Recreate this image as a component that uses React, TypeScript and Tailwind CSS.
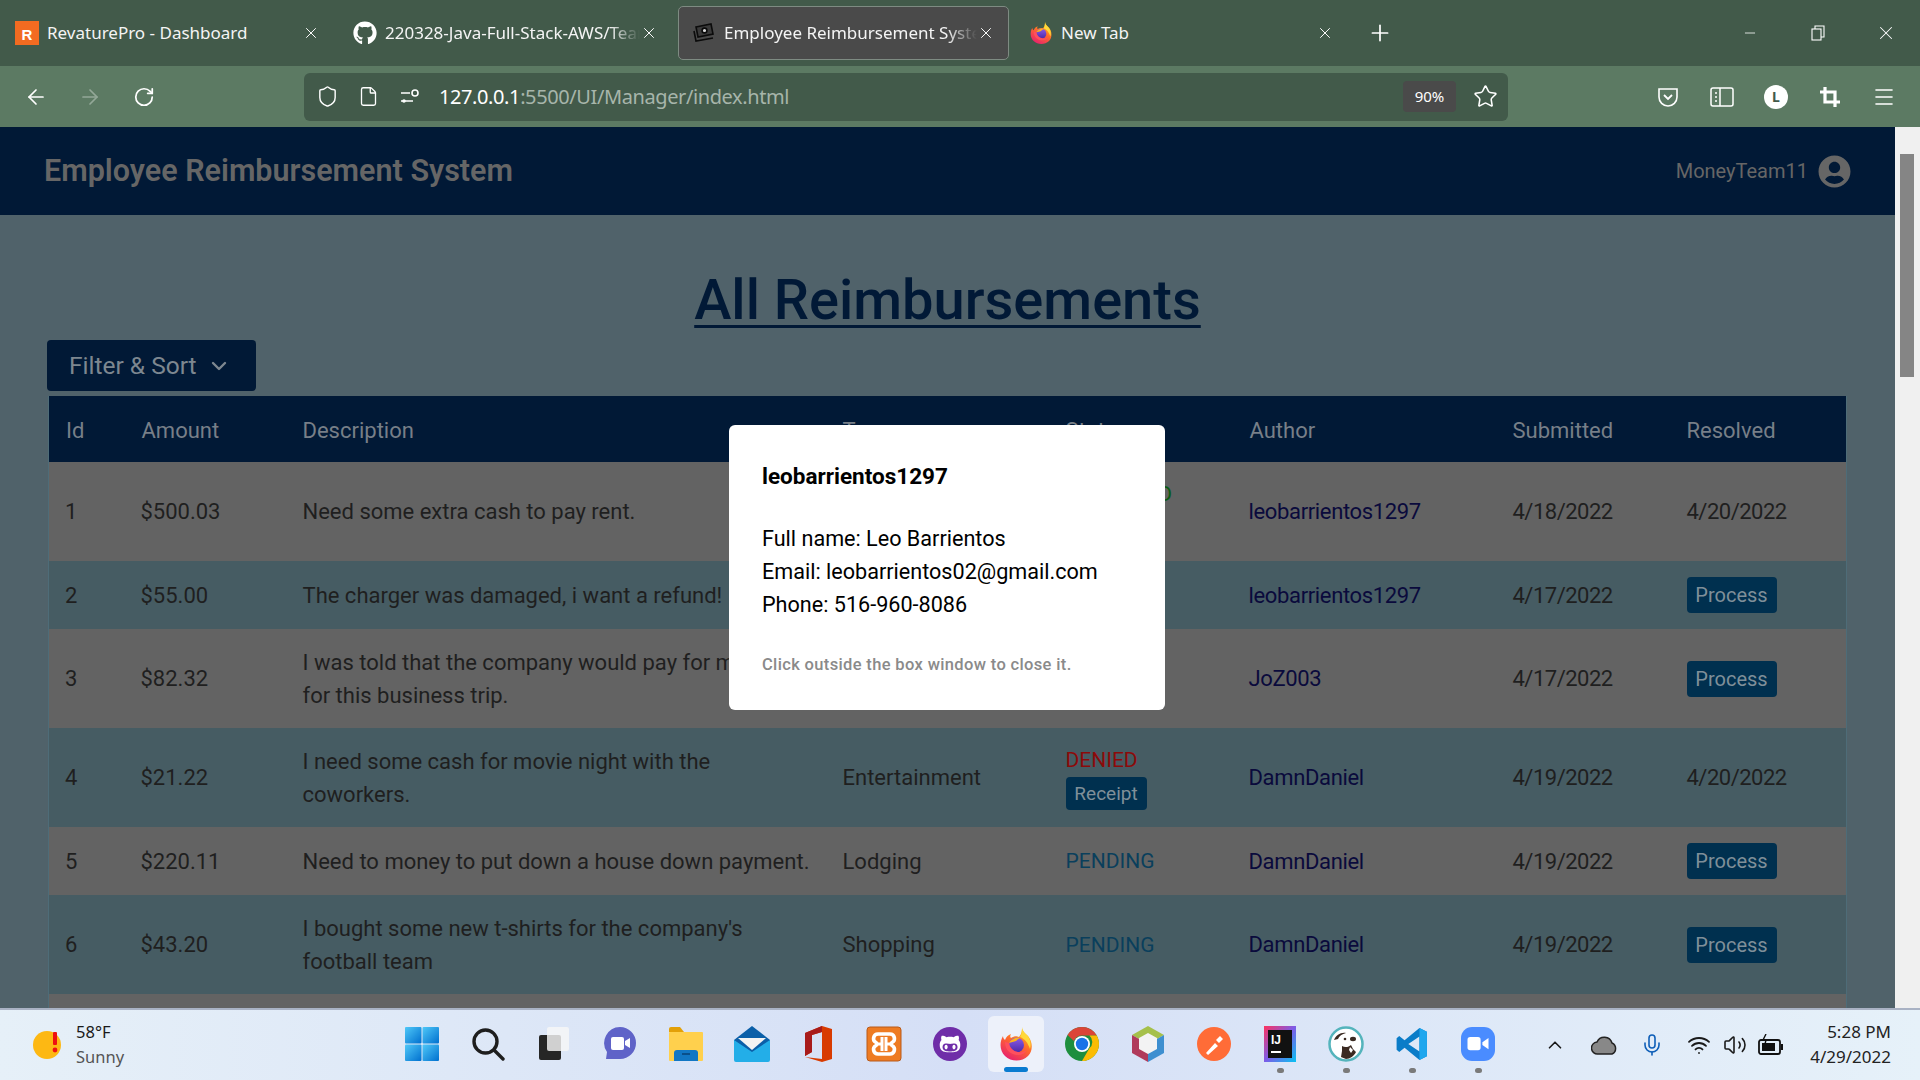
import {
  ArrowLeft,
  ArrowRight,
  ChevronDown,
  ChevronUp,
  File,
  Menu,
  Mic,
  Minus,
  Plus,
  RotateCw,
  Shield,
  Star,
  Volume2,
  Wifi,
  X,
} from 'lucide-react';
import { FaGithub, FaGithubAlt, FaUserCircle } from 'react-icons/fa';
import type { ReactNode } from 'react';

const pageFont = "font-['Roboto',sans-serif]";
const uiFont = "font-['Noto_Sans',sans-serif]";

type Row = {
  id: number;
  amount: string;
  description: string;
  type: string;
  status: 'APPROVED' | 'DENIED' | 'PENDING';
  receipt?: boolean;
  author: string;
  submitted: string;
  resolved?: string;
  height: string;
};

const rows: Row[] = [
  { id: 1, amount: '$500.03', description: 'Need some extra cash to pay rent.', type: 'Lodging', status: 'APPROVED', receipt: true, author: 'leobarrientos1297', submitted: '4/18/2022', resolved: '4/20/2022', height: 'h-[99px]' },
  { id: 2, amount: '$55.00', description: 'The charger was damaged, i want a refund!', type: 'Other', status: 'PENDING', author: 'leobarrientos1297', submitted: '4/17/2022', height: 'h-[68px]' },
  { id: 3, amount: '$82.32', description: 'I was told that the company would pay for meals\nfor this business trip.', type: 'Food', status: 'PENDING', author: 'JoZ003', submitted: '4/17/2022', height: 'h-[99px]' },
  { id: 4, amount: '$21.22', description: 'I need some cash for movie night with the\ncoworkers.', type: 'Entertainment', status: 'DENIED', receipt: true, author: 'DamnDaniel', submitted: '4/19/2022', resolved: '4/20/2022', height: 'h-[99px]' },
  { id: 5, amount: '$220.11', description: 'Need to money to put down a house down payment.', type: 'Lodging', status: 'PENDING', author: 'DamnDaniel', submitted: '4/19/2022', height: 'h-[68px]' },
  { id: 6, amount: '$43.20', description: "I bought some new t-shirts for the company's\nfootball team", type: 'Shopping', status: 'PENDING', author: 'DamnDaniel', submitted: '4/19/2022', height: 'h-[99px]' },
  { id: 7, amount: '$18.75', description: 'Lunch with a client.', type: 'Food', status: 'PENDING', author: 'DamnDaniel', submitted: '4/19/2022', height: 'h-[68px]' },
];

const statusColor = {
  APPROVED: 'text-[#0A5C12]',
  DENIED: 'text-[#8C0A0A]',
  PENDING: 'text-[#0A3F5C]',
};

const FirefoxIcon = ({ size = 24, id }: { size?: number; id: string }) => (
  <svg width={size} height={size} viewBox="0 0 36 36">
    <defs>
      <linearGradient id={`${id}Body`} x1="0.8" y1="0.1" x2="0.3" y2="1">
        <stop offset="0" stopColor="#FFC21A" />
        <stop offset="0.45" stopColor="#FF6A2B" />
        <stop offset="1" stopColor="#E8206F" />
      </linearGradient>
      <linearGradient id={`${id}Globe`} x1="0.5" y1="0" x2="0.5" y2="1">
        <stop offset="0" stopColor="#8C5BE8" />
        <stop offset="1" stopColor="#4A2AA8" />
      </linearGradient>
    </defs>
    <path d="M24 1c0 4 3 6 6 9 5 6 5 15 0 20-6 6-17 6-23 0C2 25 1 17 5 10c0 2 1 3 2 4 1-3 3-5 6-6-1 2-1 3 0 4 3-2 6-2 8-1 3-3 3-7 3-10z" fill={`url(#${id}Body)`} />
    <path d="M24 1c0 5 5 7 7 11 2 4 2 8 1 11-2-6-5-10-10-12 2-3 2-7 2-10z" fill="#FFD93B" />
    <circle cx="18.5" cy="19" r="7.5" fill={`url(#${id}Globe)`} />
    <path d="M11 17c2-4 7-6 11-5-2 1-3 2-4 3-2 1-5 1-7 2z" fill="#FFB31A" />
    <path d="M7 16c0 8 6 13 13 13 4 0 7-2 9-5-3 2-6 3-9 2-5-1-8-4-9-9z" fill="#FF4F5E" />
  </svg>
);

const TabIconRevature = () => (
  <div className="w-6 h-6 bg-[#F26B21] flex items-end justify-center text-white text-[15px] font-bold leading-[20px] font-['Liberation_Sans',sans-serif]">
    R
  </div>
);

const TabIconCash = () => (
  <svg width="24" height="24" viewBox="0 0 24 24" fill="none" stroke="#0B0B0B" strokeWidth="1.6">
    <path d="M4 6l15-3 2 10-15 3z" fill="#3A3A3A" />
    <circle cx="12.5" cy="9.5" r="2.4" fill="#D8D8D8" />
    <path d="M2 10l2 10 17-3" />
  </svg>
);

const Tab = ({ icon, title, active, fade, textWidth }: { icon: ReactNode; title: string; active?: boolean; fade?: boolean; textWidth: string }) => (
  <div className={`w-[331px] h-[54px] shrink-0 rounded-[5px] flex items-center pl-[13px] ${active ? 'bg-[#4A4A4A] border border-[#7E8B82]' : ''}`}>
    <div className="w-6 h-6 shrink-0 flex items-center justify-center">{icon}</div>
    <span
      className={`ml-2 text-[17px] text-[#F4F4F4] whitespace-nowrap overflow-hidden ${textWidth} ${fade ? '[mask-image:linear-gradient(to_right,black_88%,transparent)]' : ''}`}
    >
      {title}
    </span>
    <X size={18} strokeWidth={1.3} className="text-white ml-auto mr-[13px] shrink-0" />
  </div>
);

const TabBar = () => (
  <div className={`h-[66px] bg-[#425A4A] flex items-center pl-[2px] gap-[7px] shrink-0 ${uiFont}`}>
    <Tab icon={<TabIconRevature />} title="RevaturePro - Dashboard" textWidth="w-[260px]" />
    <Tab icon={<FaGithub size={24} className="text-white" />} title="220328-Java-Full-Stack-AWS/Team-Project" fade textWidth="w-[256px]" />
    <Tab icon={<TabIconCash />} title="Employee Reimbursement System" active fade textWidth="w-[254px]" />
    <Tab icon={<FirefoxIcon size={28} id="ffTab" />} title="New Tab" textWidth="w-[260px]" />
    <Plus size={26} strokeWidth={1.6} className="text-white ml-[13px]" />
    <div className="ml-auto flex items-center text-white">
      <div className="w-[68px] flex justify-center"><Minus size={16} strokeWidth={1.2} /></div>
      <div className="w-[68px] flex justify-center">
        <svg width="16" height="16" viewBox="0 0 16 16" fill="none" stroke="currentColor" strokeWidth="1.1">
          <rect x="2" y="4" width="9" height="11" />
          <path d="M5 4V1h9v11h-3" />
        </svg>
      </div>
      <div className="w-[68px] flex justify-center"><X size={22} strokeWidth={1.1} /></div>
    </div>
  </div>
);

const CropIcon = () => (
  <svg width="22" height="22" viewBox="0 0 22 22" fill="none" stroke="white" strokeWidth="3.2">
    <path d="M6 1v15h15" />
    <path d="M1 6h15v15" />
  </svg>
);

const ToolbarButton = ({ children }: { children: ReactNode }) => (
  <div className="w-[54px] h-full flex items-center justify-center text-white">{children}</div>
);

const Toolbar = () => (
  <div className={`h-[61px] bg-[#5C7A63] flex items-center pl-[9px] shrink-0 ${uiFont}`}>
    <ToolbarButton><ArrowLeft size={24} strokeWidth={1.7} /></ToolbarButton>
    <ToolbarButton><ArrowRight size={24} strokeWidth={1.7} className="text-[#93A898]" /></ToolbarButton>
    <ToolbarButton><RotateCw size={22} strokeWidth={1.9} /></ToolbarButton>
    <div className="ml-[133px] w-[1204px] h-12 rounded-md bg-[#425A4A] flex items-center pl-[12px] text-white">
      <Shield size={23} strokeWidth={1.5} />
      <File size={21} strokeWidth={1.5} className="ml-[19px]" />
      <svg width="22" height="16" viewBox="0 0 22 16" fill="none" stroke="white" strokeWidth="1.6" className="ml-[21px]">
        <path d="M1 4h9M1 12h12" />
        <circle cx="15" cy="4" r="3" />
        <circle cx="4" cy="12" r="1" />
      </svg>
      <span className="ml-[17px] text-[20px] whitespace-nowrap tracking-[-0.4px]">
        127.0.0.1<span className="text-[#A7B5AA]">:5500/UI/Manager/index.html</span>
      </span>
      <div className="ml-auto w-[53px] h-[31px] rounded bg-[#4A4A4A] flex items-center justify-center text-[15px]">90%</div>
      <Star size={25} strokeWidth={1.5} className="ml-[17px] mr-[10px]" />
    </div>
    <div className="ml-[133px] flex h-full">
      <ToolbarButton>
        <svg width="22" height="22" viewBox="0 0 22 22" fill="none" stroke="white" strokeWidth="1.6">
          <path d="M2 3h18v8a9 9 0 0 1-18 0z" />
          <path d="M7 9l4 4 4-4" strokeWidth="1.8" />
        </svg>
      </ToolbarButton>
      <ToolbarButton>
        <svg width="24" height="22" viewBox="0 0 24 22" fill="none" stroke="white" strokeWidth="1.5">
          <rect x="1" y="2" width="22" height="18" rx="2" />
          <path d="M10 2v18M5 7h2M5 11h2M5 15h2" />
        </svg>
      </ToolbarButton>
      <ToolbarButton>
        <div className="w-6 h-6 rounded-full bg-white text-[#425A4A] text-[14px] font-bold flex items-center justify-center">L</div>
      </ToolbarButton>
      <ToolbarButton><CropIcon /></ToolbarButton>
      <ToolbarButton><Menu size={24} strokeWidth={1.6} /></ToolbarButton>
    </div>
  </div>
);

const StatusCell = ({ row }: { row: Row }) => (
  <div className="flex flex-col items-start">
    <span className={`text-[21px] leading-[28px] ${statusColor[row.status]}`}>{row.status}</span>
    {row.receipt && (
      <button className="mt-[3px] h-[33px] w-[81px] rounded bg-[#00304F] text-[#7F8F99] text-[19px] leading-none">Receipt</button>
    )}
  </div>
);

const ReimbursementTable = () => (
  <table className="w-[1799px] table-fixed border-collapse border-x border-[#4E6C78] text-[22px] text-[#1F1F1F]">
    <colgroup>
      <col className="w-[76px]" />
      <col className="w-[161px]" />
      <col className="w-[540px]" />
      <col className="w-[223px]" />
      <col className="w-[184px]" />
      <col className="w-[263px]" />
      <col className="w-[174px]" />
      <col />
    </colgroup>
    <thead>
      <tr className="h-[66px] bg-[#011936] text-[#777F88] text-left">
        {['Id', 'Amount', 'Description', 'Type', 'Status', 'Author', 'Submitted', 'Resolved'].map((h) => (
          <th key={h} className="pl-[17px] pt-[2px] font-normal">{h}</th>
        ))}
      </tr>
    </thead>
    <tbody>
      {rows.map((row, i) => (
        <tr key={row.id} className={`${row.height} ${i % 2 === 0 ? 'bg-[#636363]' : 'bg-[#465C63]'}`}>
          <td className="pl-[16px]">{row.id}</td>
          <td className="pl-[16px]">{row.amount}</td>
          <td className="pl-[17px] leading-[33px] whitespace-pre-line">{row.description}</td>
          <td className="pl-[17px]">{row.type}</td>
          <td className="pl-[17px]"><StatusCell row={row} /></td>
          <td className="pl-[16px] text-[#0A0A3C] tracking-[-0.35px]">{row.author}</td>
          <td className="pl-[17px] tracking-[-0.5px]">{row.submitted}</td>
          <td className="pl-[17px] tracking-[-0.5px]">
            {row.resolved ?? (
              <button className="h-9 w-[90px] rounded bg-[#00304F] text-[#7F8F99] text-[20px] leading-none tracking-normal">Process</button>
            )}
          </td>
        </tr>
      ))}
    </tbody>
  </table>
);

const UserModal = () => (
  <div className="absolute left-[729px] top-[298px] w-[436px] h-[285px] rounded-md bg-white pl-[33px] pt-[37px] text-black">
    <h2 className="text-[22.5px] font-bold leading-[28px]">leobarrientos1297</h2>
    <div className="mt-[32px] text-[21.6px] leading-[33px]">
      <p>Full name: Leo Barrientos</p>
      <p>Email: leobarrientos02@gmail.com</p>
      <p>Phone: 516-960-8086</p>
    </div>
    <p className="mt-[32px] text-[16.5px] font-medium tracking-[0.35px] text-[#8A8A8A]">Click outside the box window to close it.</p>
  </div>
);

const Page = () => (
  <div className={`flex-1 min-h-0 flex overflow-hidden relative ${pageFont}`}>
    <main className="w-[1895px] bg-[#50626A] overflow-hidden">
      <header className="h-[88px] bg-[#011936] flex items-center justify-between pl-[44px] pr-[44px]">
        <h1 className="text-[30.5px] font-semibold text-[#666666]">Employee Reimbursement System</h1>
        <div className="flex items-center gap-[10px] text-[#666666]">
          <span className="text-[20px]">MoneyTeam11</span>
          <FaUserCircle size={33} />
        </div>
      </header>
      <h1 className="mt-[50px] text-center text-[56px] leading-[70px] font-medium text-[#011936] underline decoration-[3px] underline-offset-[6px]">
        All Reimbursements
      </h1>
      <div className="ml-[47px] mt-[5px]">
        <button className="h-[51px] w-[209px] rounded bg-[#011936] pl-[22px] pt-[1px] flex items-center gap-[10px] text-[24.5px] text-[#7D8790]">
          Filter &amp; Sort <ChevronDown size={24} strokeWidth={2.4} />
        </button>
      </div>
      <div className="ml-[48px] mt-[5px]">
        <ReimbursementTable />
      </div>
    </main>
    <div className="w-[25px] bg-[#F0F0F0] pl-[5px] pt-[27px]">
      <div className="w-[14px] h-[223px] bg-[#858585]" />
    </div>
    <UserModal />
  </div>
);

const WindowsIcon = () => (
  <svg width="36" height="36" viewBox="0 0 36 36">
    <defs>
      <linearGradient id="win" x1="0" y1="0" x2="1" y2="1">
        <stop offset="0" stopColor="#4FC8F8" />
        <stop offset="1" stopColor="#0070CF" />
      </linearGradient>
    </defs>
    <rect x="1" y="1" width="16.5" height="16.5" rx="1" fill="url(#win)" />
    <rect x="18.5" y="1" width="16.5" height="16.5" rx="1" fill="url(#win)" />
    <rect x="1" y="18.5" width="16.5" height="16.5" rx="1" fill="url(#win)" />
    <rect x="18.5" y="18.5" width="16.5" height="16.5" rx="1" fill="url(#win)" />
  </svg>
);

const SearchIcon = () => (
  <svg width="34" height="34" viewBox="0 0 34 34" fill="none" stroke="#1E1E1E" strokeWidth="3.4" strokeLinecap="round">
    <circle cx="14.5" cy="14.5" r="11.5" />
    <path d="M23 23l9 9" />
  </svg>
);

const TaskViewIcon = () => (
  <svg width="34" height="36" viewBox="0 0 34 36">
    <rect x="2" y="9" width="22" height="25" rx="2" fill="#262626" />
    <rect x="10" y="1" width="22" height="24" rx="2" fill="#F6F6F6" fillOpacity="0.82" />
  </svg>
);

const ChatIcon = () => (
  <svg width="34" height="36" viewBox="0 0 34 36">
    <path d="M17 1a16 16 0 0 1 0 32H3l1-7a16 16 0 0 1 13-25z" fill="#5F63C8" />
    <rect x="8" y="11" width="13" height="13" rx="2" fill="#fff" />
    <path d="M22 15l5-3v10l-5-3z" fill="#fff" />
  </svg>
);

const FolderIcon = () => (
  <svg width="36" height="34" viewBox="0 0 36 34">
    <path d="M1 2a2 2 0 0 1 2-2h9l4 5H1z" fill="#E3A008" />
    <rect x="1" y="5" width="34" height="29" rx="1" fill="#FFD04D" />
    <path d="M6 34v-8a3 3 0 0 1 3-3h18a3 3 0 0 1 3 3v8z" fill="#1277C4" />
    <rect x="14" y="26" width="8" height="2" fill="#0A4F8A" />
  </svg>
);

const MailIcon = () => (
  <svg width="36" height="36" viewBox="0 0 36 36">
    <path d="M18 0l18 14v20H0V14z" fill="#0B5FA8" />
    <path d="M4 12h28L18 24z" fill="#F3F3F3" />
    <path d="M0 14l18 12 18-12v20a2 2 0 0 1-2 2H2a2 2 0 0 1-2-2z" fill="#23AEE8" />
  </svg>
);

const OfficeIcon = () => (
  <svg width="30" height="36" viewBox="0 0 30 36">
    <path d="M19 0l10 3v30l-10 3-17-5 17 2V6L9 9v17l-7 4V7z" fill="#D83B01" />
    <path d="M19 0v6L9 9v17l-7 4V7z" fill="#A81B1B" />
  </svg>
);

const XamppIcon = () => (
  <svg width="36" height="36" viewBox="0 0 36 36" fill="none">
    <rect x="1" y="1" width="34" height="34" rx="3" fill="#EE7B22" stroke="#B85A1A" />
    <path d="M12 8h12a4.5 4.5 0 0 1 2 8.5c-1 .7-1 2.3 0 3A4.5 4.5 0 0 1 24 28H12a4.5 4.5 0 0 1-2-8.5c1-.7 1-2.300 0-3A4.5 4.500 0 0 1 12 8z" stroke="#fff" strokeWidth="3.6" fill="#EE7B22" />
    <path d="M9 18h7M20 18h7M16 11v14M20 11v14" stroke="#fff" strokeWidth="3" />
  </svg>
);

const GithubIcon = () => (
  <div className="w-[34px] h-[34px] rounded-full bg-[#6F2DA8] flex items-center justify-center">
    <FaGithubAlt size={22} className="text-white" />
  </div>
);

const ChromeIcon = () => (
  <svg width="34" height="34" viewBox="0 0 34 34">
    <circle cx="17" cy="17" r="17" fill="#1E8E3E" />
    <path d="M17 0a17 17 0 0 1 14.7 8.5H17a8.5 8.5 0 0 0-8 5.5L2.6 8A17 17 0 0 1 17 0z" fill="#DB4437" />
    <path d="M31.7 8.5A17 17 0 0 1 17 34l7.4-12.7a8.5 8.5 0 0 0 0-12.8z" fill="#FBBC04" />
    <circle cx="17" cy="17" r="8" fill="#fff" />
    <circle cx="17" cy="17" r="6.2" fill="#1A73E8" />
  </svg>
);

const BootstrapStudioIcon = () => (
  <svg width="32" height="36" viewBox="0 0 32 36">
    <path d="M16 0l16 9-16 9L0 9z" fill="#A5C04A" />
    <path d="M0 9l16 9v18L0 27z" fill="#B03A5B" />
    <path d="M32 9L16 18v18l16-9z" fill="#3E8FD0" />
    <path d="M16 7l9 5v11l-9 5-9-5V12z" fill="#F3F3F3" />
  </svg>
);

const PostmanIcon = () => (
  <svg width="34" height="34" viewBox="0 0 34 34">
    <circle cx="17" cy="17" r="17" fill="#FF6C37" />
    <path d="M9 26l9-10 3 3-10 9zM19 13l4-4 3 3-4 4z" fill="#fff" />
  </svg>
);

const IntellijIcon = () => (
  <svg width="32" height="36" viewBox="0 0 32 36">
    <defs>
      <linearGradient id="ij" x1="0" y1="0" x2="1" y2="1">
        <stop offset="0" stopColor="#FE315D" />
        <stop offset="0.5" stopColor="#7C5CE8" />
        <stop offset="1" stopColor="#07C3F2" />
      </linearGradient>
    </defs>
    <rect width="32" height="36" fill="url(#ij)" />
    <rect x="4" y="4" width="24" height="28" fill="#111" />
    <text x="7" y="18" fontSize="12" fontWeight="700" fill="#fff" fontFamily="Liberation Sans, sans-serif">IJ</text>
    <rect x="7" y="25" width="10" height="2" fill="#fff" />
  </svg>
);

const DbeaverIcon = () => (
  <svg width="36" height="36" viewBox="0 0 36 36">
    <circle cx="18" cy="18" r="16.5" fill="#fff" stroke="#54B4BC" strokeWidth="2.5" />
    <path d="M6 14c2-5 7-8 12-7-4 1-7 3-8 6z" fill="#3A2A22" />
    <path d="M14 20c3 2 7 1 9-1l2 4 3 3c-2 4-6 7-10 7l-5-2 1-6z" fill="#3A2A22" />
    <ellipse cx="25" cy="13" rx="3" ry="2.2" fill="#3A2A22" />
    <circle cx="17" cy="13" r="1.3" fill="#3A2A22" />
    <path d="M22 21l3 3-2 3-2-3z" fill="#fff" />
  </svg>
);

const VscodeIcon = () => (
  <svg width="34" height="36" viewBox="0 0 32 32">
    <path d="M23 1L30 4.5V27.5L23 31V9L12.5 16 23 23v8L9 19.5 4 23.5 1.5 21.5V10.5L4 8.5 9 12.5z" fill="#0A7CC8" />
    <path d="M23 1L30 4.5V27.5L23 31z" fill="#1FA7EE" />
  </svg>
);

const ZoomIcon = () => (
  <div className="w-[34px] h-[34px] rounded-[11px] bg-[#4A8CFF] flex items-center justify-center">
    <svg width="22" height="14" viewBox="0 0 24 16" fill="#fff">
      <rect width="15" height="15" rx="3" />
      <path d="M17 6l7-5v13l-7-5z" />
    </svg>
  </div>
);

const apps: { key: string; icon: ReactNode; dot?: boolean; active?: boolean }[] = [
  { key: 'windows', icon: <WindowsIcon /> },
  { key: 'search', icon: <SearchIcon /> },
  { key: 'taskview', icon: <TaskViewIcon /> },
  { key: 'chat', icon: <ChatIcon /> },
  { key: 'files', icon: <FolderIcon /> },
  { key: 'mail', icon: <MailIcon /> },
  { key: 'office', icon: <OfficeIcon /> },
  { key: 'xampp', icon: <XamppIcon /> },
  { key: 'github', icon: <GithubIcon /> },
  { key: 'firefox', icon: <FirefoxIcon size={36} id="ffBar" />, active: true },
  { key: 'chrome', icon: <ChromeIcon /> },
  { key: 'bootstrap', icon: <BootstrapStudioIcon /> },
  { key: 'postman', icon: <PostmanIcon /> },
  { key: 'intellij', icon: <IntellijIcon />, dot: true },
  { key: 'dbeaver', icon: <DbeaverIcon />, dot: true },
  { key: 'vscode', icon: <VscodeIcon />, dot: true },
  { key: 'zoom', icon: <ZoomIcon />, dot: true },
];

const Taskbar = () => (
  <div className={`h-[72px] shrink-0 border-t-2 border-[#A9B2C4] bg-linear-to-r from-[#E6F0F8] via-[#D5DFF6] to-[#E6F1F9] flex items-center relative ${uiFont}`}>
    <div className="ml-[31px] w-[358px] flex items-center">
      <svg width="32" height="32" viewBox="0 0 32 32">
        <circle cx="16" cy="16" r="14" fill="#FDB813" />
        <rect x="22" y="3" width="4" height="13" rx="1" fill="#E11" />
        <circle cx="24" cy="21" r="2.4" fill="#E11" />
      </svg>
      <div className="ml-[13px] text-[16.5px] leading-[25px] mt-[-2px]">
        <div className="text-[#1A1A1A]">58°F</div>
        <div className="text-[#555]">Sunny</div>
      </div>
    </div>
    <div className="flex">
      {apps.map((app) => (
        <div key={app.key} className="w-[66px] h-[70px] flex items-center justify-center relative">
          {app.active && <div className="absolute left-[5px] top-[6px] w-[56px] h-[56px] rounded-md bg-[#EDF1FA]" />}
          <div className="relative flex mt-[-2px]">{app.icon}</div>
          {app.active && <div className="absolute top-[57px] left-[21px] w-6 h-[5px] rounded-full bg-[#0A7BD0]" />}
          {app.dot && <div className="absolute bottom-[7px] left-[30px] w-[7px] h-[5px] rounded-full bg-[#7A7A7A]" />}
        </div>
      ))}
    </div>
    <div className="ml-[33px] flex items-center text-[#1A1A1A]">
      <ChevronUp size={22} strokeWidth={1.8} />
      <svg width="28" height="22" viewBox="0 0 28 22" className="ml-[25px]">
        <path d="M7 20a6 6 0 0 1-1-12 8 8 0 0 1 15 1 6 6 0 0 1 0 11z" fill="#888" stroke="#222" strokeWidth="1.5" />
      </svg>
      <Mic size={24} strokeWidth={1.6} className="ml-[21px] text-[#0F5FB8]" />
      <Wifi size={24} strokeWidth={1.8} className="ml-[23px]" />
      <Volume2 size={24} strokeWidth={1.6} className="ml-[12px]" />
      <svg width="26" height="22" viewBox="0 0 26 22" className="ml-[11px]">
        <rect x="1" y="6" width="21" height="14" rx="2" fill="none" stroke="#111" strokeWidth="1.8" />
        <rect x="4" y="9" width="13" height="8" fill="#111" />
        <rect x="23" y="10" width="2" height="6" fill="#111" />
        <path d="M8 0L5 6h3l-1 4" fill="none" stroke="#111" strokeWidth="1.4" />
      </svg>
    </div>
    <div className="absolute right-[29px] top-[9px] text-right text-[17px] leading-[25px] text-[#222]">
      <div>5:28 PM</div>
      <div>4/29/2022</div>
    </div>
  </div>
);

const App = () => (
  <div className="w-[1920px] h-[1080px] flex flex-col overflow-hidden">
    <TabBar />
    <Toolbar />
    <Page />
    <Taskbar />
  </div>
);

export default App;
